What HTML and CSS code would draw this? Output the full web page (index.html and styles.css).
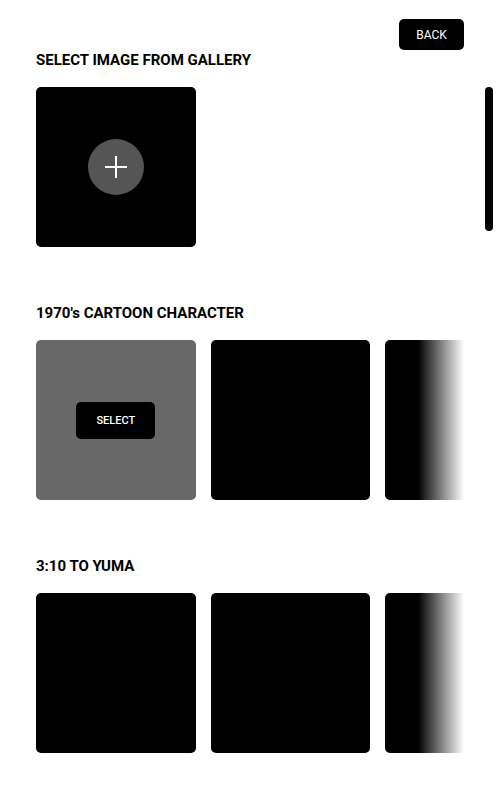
FILE: index.html
```html
<!DOCTYPE html>
<html>
<head>
<meta charset="utf-8">
<link rel="stylesheet" href="styles.css">
</head>
<body>
<div class="page">
  <div class="topbar"><button class="back">BACK</button></div>
  <section class="section first">
    <h2 class="title">SELECT IMAGE FROM GALLERY</h2>
    <div class="row">
      <div class="tile">
        <div class="add">
          <svg width="22" height="22" viewBox="0 0 22 22"><path d="M11 0V22M0 11H22" stroke="#fff" stroke-width="2"/></svg>
        </div>
      </div>
    </div>
  </section>
  <section class="section">
    <h2 class="title">1970's CARTOON CHARACTER</h2>
    <div class="row fade">
      <div class="tile selected"><button class="select">SELECT</button></div>
      <div class="tile"></div>
      <div class="tile"></div>
      <div class="fader"></div>
    </div>
  </section>
  <section class="section">
    <h2 class="title">3:10 TO YUMA</h2>
    <div class="row fade">
      <div class="tile"></div>
      <div class="tile"></div>
      <div class="tile"></div>
      <div class="fader"></div>
    </div>
  </section>
  <div class="scrollbar"></div>
</div>
</body>
</html>
```
FILE: styles.css
```css
* { box-sizing: border-box; }
html, body { margin: 0; padding: 0; background: #fff; }
body { font-family: Roboto, "Liberation Sans", sans-serif; color: #000; }
.page { position: relative; width: 500px; height: 800px; padding: 19px 36px 0 36px; overflow: hidden; }
.topbar { display: flex; justify-content: flex-end; height: 31px; }
.back {
  width: 65px; height: 31px; background: #000; color: #fff; border: 0; border-radius: 5px;
  font-family: Roboto, sans-serif; font-size: 12px; padding: 0; cursor: pointer;
}
.section { margin-top: 56px; }
.section.first { margin-top: 0; }
.title { margin: 0; height: 20px; line-height: 20px; font-size: 15px; font-weight: 700; }
.row { position: relative; display: flex; gap: 15px; margin-top: 17px; overflow: hidden; width: 428px; }
.tile { flex: 0 0 159.6px; height: 160px; background: #000; border-radius: 5px; display: flex; align-items: center; justify-content: center; }
.tile.selected { background: #686868; }
.add { width: 56px; height: 56px; border-radius: 50%; background: #555; display: flex; align-items: center; justify-content: center; }
.add svg { display: block; }
.select {
  width: 79px; height: 37px; background: #000; color: #fff; border: 0; border-radius: 5px;
  font-family: Roboto, sans-serif; font-size: 11px; font-weight: 500; padding: 0;
}
.fader { position: absolute; top: 0; right: 0; width: 46px; height: 100%; background: linear-gradient(to right, rgba(255,255,255,0), #fff); }
.scrollbar { position: absolute; left: 485px; top: 87px; width: 8px; height: 144px; border-radius: 4px; background: #000; }
```
